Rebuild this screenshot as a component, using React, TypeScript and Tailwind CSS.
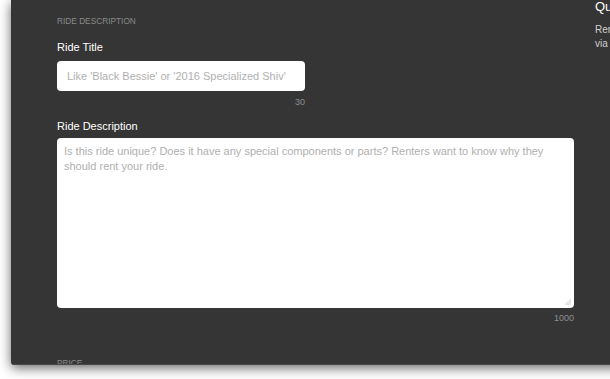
import React from 'react';

const font = { fontFamily: '"Liberation Sans", Arial, sans-serif' };

function Grip() {
  // dotted resize grip, like the old Windows textarea corner
  const dots = [
    [5, 1],
    [3, 3],
    [5, 3],
    [1, 5],
    [3, 5],
    [5, 5],
  ];
  return (
    <svg width="7" height="7" viewBox="0 0 7 7" className="absolute right-[2px] bottom-[2px]">
      {dots.map(([x, y], i) => (
        <rect key={i} x={x - 0.5} y={y - 0.5} width="1" height="1" fill="#9a9a9a" />
      ))}
    </svg>
  );
}

export default function App() {
  return (
    <div className="w-[610px] h-[379px] overflow-hidden bg-white" style={font}>
      <div className="ml-[11px] w-[620px] h-[365px] bg-[#353535] border-b border-[#4a4a4a] rounded-bl-[3px] overflow-hidden flex items-start shadow-[0_3px_12px_rgba(0,0,0,0.6)]">
        <div className="pl-[46px] w-[563px] shrink-0">
          <div className="pt-[16px] text-[8.3px] leading-[10px] uppercase text-[#8a8a8a]">Ride Description</div>

          <label className="block mt-[14px] text-[11px] leading-[14px] text-white">Ride Title</label>
          <input
            type="text"
            placeholder="Like 'Black Bessie' or '2016 Specialized Shiv'"
            className="block mt-[7px] w-[248px] h-[30px] rounded-[4px] bg-white px-[10px] text-[11px] text-[#333] placeholder:text-[#b0b0b0] outline-none"
          />
          <div className="w-[248px] mt-[6px] text-right text-[9px] leading-[10px] text-[#8f8f8f]">30</div>

          <label className="block mt-[12px] text-[11px] leading-[14px] text-white">Ride Description</label>
          <div className="relative mt-[5px] w-[517px] h-[170px]">
            <textarea
              placeholder="Is this ride unique? Does it have any special components or parts? Renters want to know why they should rent your ride."
              className="block w-full h-full resize-none rounded-[4px] bg-white px-[7px] py-[6px] text-[11px] leading-[15px] text-[#333] placeholder:text-[#b0b0b0] outline-none"
            />
            <Grip />
          </div>
          <div className="w-[517px] mt-[5px] text-right text-[9px] leading-[10px] text-[#8f8f8f]">1000</div>

          <div className="mt-[35px] text-[8.3px] leading-[10px] uppercase text-[#8a8a8a]">Price</div>
        </div>

        <div className="ml-[21px] w-[200px] shrink-0">
          <div className="text-[13px] leading-[14px] text-white">Quick tips</div>
          <p className="mt-[9px] text-[10px] leading-[14px] text-[#d0d0d0]">
            Renters can reach you with questions
            <br />
            via messages.
          </p>
        </div>
      </div>
    </div>
  );
}
